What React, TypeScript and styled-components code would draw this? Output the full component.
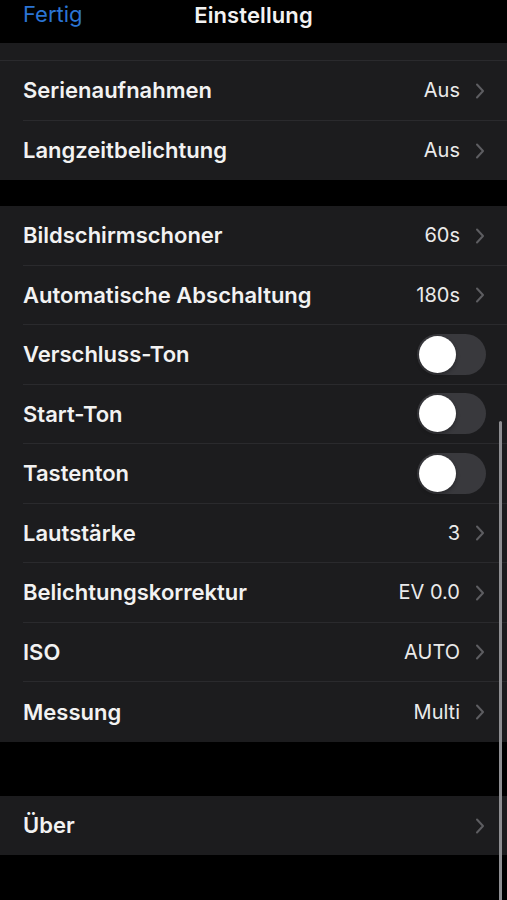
import styled, { createGlobalStyle } from 'styled-components';

type Item = {
    label: string;
    value?: string;
    toggle?: boolean;
};

const GROUP_ONE: Item[] = [
    { label: 'Serienaufnahmen', value: 'Aus' },
    { label: 'Langzeitbelichtung', value: 'Aus' },
];

const GROUP_TWO: Item[] = [
    { label: 'Bildschirmschoner', value: '60s' },
    { label: 'Automatische Abschaltung', value: '180s' },
    { label: 'Verschluss-Ton', toggle: true },
    { label: 'Start-Ton', toggle: true },
    { label: 'Tastenton', toggle: true },
    { label: 'Lautstärke', value: '3' },
    { label: 'Belichtungskorrektur', value: 'EV 0.0' },
    { label: 'ISO', value: 'AUTO' },
    { label: 'Messung', value: 'Multi' },
];

function Chevron() {
    return (
        <ChevronIcon width="10" height="16" viewBox="0 0 10 16" fill="none">
            <path d="M2 1.5l6 6.5-6 6.5" stroke="currentColor" strokeWidth="2" strokeLinecap="round" strokeLinejoin="round" />
        </ChevronIcon>
    );
}

function SettingRow({ item }: { item: Item }) {
    return (
        <Row>
            <Label>{item.label}</Label>
            {item.toggle ? (
                <Toggle>
                    <Knob />
                </Toggle>
            ) : (
                <Trailing>
                    {item.value && <Value>{item.value}</Value>}
                    <Chevron />
                </Trailing>
            )}
        </Row>
    );
}

export default function App() {
    return (
        <>
            <GlobalStyle />
            <Screen>
                <NavBar>
                    <DoneButton>Fertig</DoneButton>
                    <Title>Einstellung</Title>
                </NavBar>
                <Content>
                    <Group>
                        <PartialRow />
                        {GROUP_ONE.map((item) => (
                            <SettingRow key={item.label} item={item} />
                        ))}
                    </Group>
                    <Gap $height={26} />
                    <Group>
                        {GROUP_TWO.map((item) => (
                            <SettingRow key={item.label} item={item} />
                        ))}
                    </Group>
                    <Gap $height={54} />
                    <Group>
                        <SettingRow item={{ label: 'Über' }} />
                    </Group>
                </Content>
                <ScrollIndicator />
            </Screen>
        </>
    );
}

const GlobalStyle = createGlobalStyle`
    html, body {
        margin: 0;
        padding: 0;
        background: #000;
    }
    body {
        font-family: Inter, "Noto Sans", "Liberation Sans", sans-serif;
        -webkit-font-smoothing: antialiased;
    }
`;

const Screen = styled.div`
    position: relative;
    width: 507px;
    height: 900px;
    overflow: hidden;
    background: #000;
`;

const NavBar = styled.header`
    position: relative;
    display: flex;
    align-items: center;
    justify-content: center;
    height: 43px;
    padding-bottom: 14px;
    box-sizing: border-box;
    background: #000;
`;

const DoneButton = styled.span`
    position: absolute;
    left: 23px;
    top: 1px;
    font-size: 22px;
    color: #2b74d3;
`;

const Title = styled.h1`
    margin: 0;
    font-size: 22px;
    font-weight: 600;
    color: #f2f2f2;
    letter-spacing: 0.1px;
`;

const Content = styled.main`
    display: flex;
    flex-direction: column;
`;

const Group = styled.section`
    background: #1c1c1e;
`;

const Gap = styled.div<{ $height: number }>`
    height: ${({ $height }) => $height}px;
`;

const PartialRow = styled.div`
    height: 17px;
    border-bottom: 1px solid #2a2a2d;
`;

const Row = styled.div`
    display: flex;
    align-items: center;
    justify-content: space-between;
    height: 59.5px;
    margin-left: 23px;
    padding-right: 22px;
    box-sizing: border-box;
    border-bottom: 1px solid #2a2a2d;

    &:last-child {
        border-bottom: none;
    }
`;

const Label = styled.span`
    font-size: 22px;
    font-weight: 600;
    color: #f2f2f2;
`;

const Trailing = styled.div`
    display: flex;
    align-items: center;
    gap: 15px;
`;

const Value = styled.span`
    font-size: 20px;
    color: #eaeaea;
`;

const ChevronIcon = styled.svg`
    color: #5d5d61;
    margin-top: 1px;
`;

const Toggle = styled.div`
    display: flex;
    align-items: center;
    width: 69px;
    height: 41px;
    padding: 2px;
    box-sizing: border-box;
    border-radius: 21px;
    background: #39393d;
    margin-right: -1px;
`;

const Knob = styled.div`
    width: 37px;
    height: 37px;
    border-radius: 50%;
    background: #fff;
    box-shadow: 0 2px 4px rgba(0, 0, 0, 0.3);
`;

const ScrollIndicator = styled.div`
    position: absolute;
    right: 5px;
    top: 421px;
    width: 3px;
    height: 490px;
    border-radius: 2px;
    background: #8e8e92;
`;
